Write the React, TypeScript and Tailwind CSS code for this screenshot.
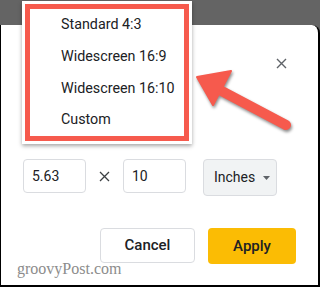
import React from "react";

const roboto = { fontFamily: "Roboto, 'Liberation Sans', sans-serif" };

export default function App() {
  const items = ["Standard 4:3", "Widescreen 16:9", "Widescreen 16:10", "Custom"];
  return (
    <div
      className="relative w-[320px] h-[287px] overflow-hidden bg-[#646464] font-['Roboto',sans-serif]"
    >
      {/* Dialog */}
      <div className="mt-[25px] h-[262px] bg-white rounded-tr-[8px] border-l border-r-2 border-b-2 border-black flex flex-col">
        <div className="flex justify-end pt-[33px] pr-[31px]">
          <svg width="11" height="11" viewBox="0 0 11 11">
            <path d="M1 1 L10 10 M10 1 L1 10" stroke="#5f6368" strokeWidth="1.4" />
          </svg>
        </div>
        <div className="mt-[90px] pl-[22px] flex items-start text-[14px] text-[#202124]">
          <div className="w-[63px] h-[34px] border border-[#dadce0] rounded-[4px] flex items-center pl-[8px]">
            5.63
          </div>
          <div className="w-[37px] h-[34px] flex items-center justify-center">
            <svg width="11" height="11" viewBox="0 0 11 11">
              <path d="M1 1 L10 10 M10 1 L1 10" stroke="#3c4043" strokeWidth="1.3" />
            </svg>
          </div>
          <div className="w-[63px] h-[34px] border border-[#dadce0] rounded-[4px] flex items-center pl-[8px]">
            10
          </div>
          <div className="ml-[17px] w-[74px] h-[37px] bg-[#f1f3f4] border border-[#dadce0] rounded-[4px] flex items-center pl-[10px]">
            <span>Inches</span>
            <svg className="ml-[8px]" width="7" height="4" viewBox="0 0 7 4">
              <path d="M0 0 L7 0 L3.5 4 Z" fill="#5f6368" />
            </svg>
          </div>
        </div>
        <div className="mt-[32px] flex justify-end pr-[22px] gap-[13px] text-[15px] font-medium text-[#202124]">
          <div className="w-[95px] h-[35px] border border-[#dadce0] rounded-[4px] flex items-center justify-center">
            Cancel
          </div>
          <div className="w-[88px] h-[36px] bg-[#fbbc04] rounded-[4px] flex items-center justify-center">
            Apply
          </div>
        </div>
      </div>

      {/* Dropdown menu */}
      <div className="absolute left-[22px] top-[1px] w-[170px] h-[143px] bg-white p-[3px] shadow-[0_2px_4px_rgba(0,0,0,0.35)]">
        <div className="w-full h-full border-[5px] border-[#f65a4d] flex flex-col">
          {items.map((t) => (
            <div
              key={t}
              className="h-[32px] flex items-center pl-[31px] text-[14.3px] text-[#202124]"
              style={roboto}
            >
              {t}
            </div>
          ))}
        </div>
      </div>

      {/* Arrow annotation */}
      <svg
        className="absolute left-0 top-0"
        width="320"
        height="287"
        viewBox="0 0 320 287"
        style={{ filter: "drop-shadow(1px 2px 1.5px rgba(0,0,0,0.45))" }}
      >
        <line x1="216" y1="88" x2="286" y2="125" stroke="#f65a4d" strokeWidth="10" strokeLinecap="round" />
        <polygon points="197,77 231,71 213,105" fill="#f65a4d" stroke="#f65a4d" strokeWidth="2" strokeLinejoin="round" />
      </svg>

      {/* Watermark */}
      <div className="absolute left-[17px] top-[259px] text-[16px] leading-[20px] text-[#8c8c8c] font-['Liberation_Serif',serif]">
        groovyPost.com
      </div>
    </div>
  );
}
